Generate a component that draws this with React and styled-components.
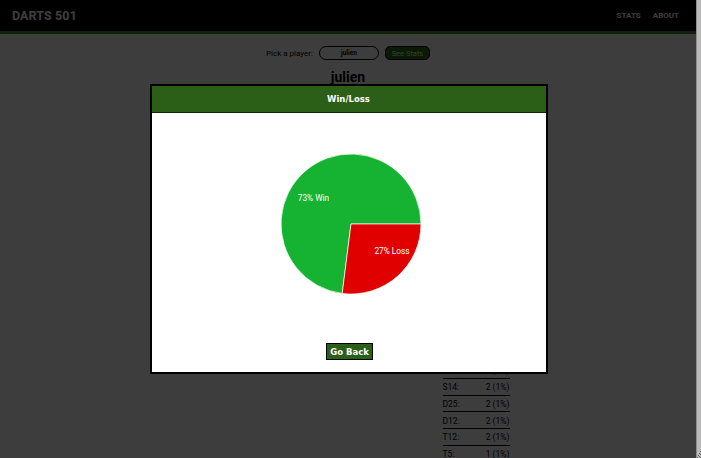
import React from 'react';
import styled, { createGlobalStyle } from 'styled-components';

const GlobalStyle = createGlobalStyle`
  html, body {
    margin: 0;
    padding: 0;
    overflow: hidden;
    background: #fff;
    font-family: Roboto, "Liberation Sans", sans-serif;
  }
`;

const stats = [
  ['S20', '14 (9%)'], ['S1', '12 (8%)'], ['S5', '11 (7%)'], ['S19', '9 (6%)'],
  ['T20', '8 (5%)'], ['S18', '7 (5%)'], ['S3', '6 (4%)'], ['S17', '6 (4%)'],
  ['S12', '5 (3%)'], ['D20', '5 (3%)'], ['S25', '4 (3%)'], ['S15', '4 (3%)'],
  ['S9', '3 (2%)'], ['T19', '3 (2%)'], ['S6', '3 (2%)'], ['S16', '3 (2%)'],
  ['S11', '2 (1%)'], ['S14', '2 (1%)'], ['D25', '2 (1%)'], ['D12', '2 (1%)'],
  ['T12', '2 (1%)'], ['T5', '1 (1%)'], ['S2', '1 (1%)'], ['S8', '1 (1%)'],
];

function Pie({ win }) {
  const r = 70;
  const c = 70;
  const lossAngle = (1 - win) * 2 * Math.PI;
  const ex = c + r * Math.cos(lossAngle);
  const ey = c + r * Math.sin(lossAngle);
  const large = lossAngle > Math.PI ? 1 : 0;
  return (
    <PieSvg width="140" height="140" viewBox="0 0 140 140">
      <path
        d={`M${c},${c} L${c + r},${c} A${r},${r} 0 ${1 - large} 0 ${ex},${ey} Z`}
        fill="#15b331"
        stroke="#fff"
        strokeWidth="0.7"
      />
      <path
        d={`M${c},${c} L${c + r},${c} A${r},${r} 0 ${large} 1 ${ex},${ey} Z`}
        fill="#e00000"
        stroke="#fff"
        strokeWidth="0.7"
      />
      <text x="32.5" y="47" textAnchor="middle" fill="#fff" fontSize="8.3" fontFamily="Roboto, sans-serif">
        {Math.round(win * 100)}% Win
      </text>
      <text x="111" y="100" textAnchor="middle" fill="#fff" fontSize="8.3" fontFamily="Roboto, sans-serif">
        {Math.round((1 - win) * 100)}% Loss
      </text>
    </PieSvg>
  );
}

export default function App() {
  return (
    <>
      <GlobalStyle />
      <Frame>
        <Page>
          <Header>
            <Logo>DARTS 501</Logo>
            <Nav>
              <a href="#">Stats</a>
              <a href="#">About</a>
            </Nav>
          </Header>
          <PickRow>
            <label>Pick a player:</label>
            <PlayerInput defaultValue="julien" />
            <SeeStats>See Stats</SeeStats>
          </PickRow>
          <PlayerName>julien</PlayerName>
          <StatsArea>
            <Charts />
            <StatsTable>
              {stats.map(([k, v]) => (
                <StatRow key={k}>
                  <span>{k}:</span>
                  <span>{v}</span>
                </StatRow>
              ))}
            </StatsTable>
          </StatsArea>
          <Overlay>
            <Modal>
              <ModalHeader>Win/Loss</ModalHeader>
              <ModalBody>
                <Pie win={0.73} />
                <GoBack>Go Back</GoBack>
              </ModalBody>
            </Modal>
          </Overlay>
        </Page>
        <ScrollTrack>
          <svg width="4" height="8" viewBox="0 0 4 8">
            <path d="M3,1h1v1h-1zM2,3h1v1h-1zM3,4h1v1h-1zM1,5h1v1h-1zM2,6h1v1h-1zM0,7h1v1h-1zM3,7h1v1h-1z" fill="#666" />
          </svg>
        </ScrollTrack>
      </Frame>
    </>
  );
}

const Frame = styled.div`
  display: flex;
  height: 100vh;
`;

const Page = styled.div`
  position: relative;
  flex: 1;
  height: 100vh;
  overflow: hidden;
  background: #fff;
`;

const ScrollTrack = styled.div`
  width: 4px;
  background: #b9b9b9;
  border-left: 1px solid #8e8e8e;
  display: flex;
  flex-direction: column;
  justify-content: flex-end;
`;

const Header = styled.div`
  height: 31px;
  background: #000;
  border-bottom: 3px solid #3f8a22;
  display: flex;
  align-items: center;
  justify-content: space-between;
  padding: 0 17px 0 12px;
`;

const Logo = styled.div`
  color: #fff;
  font-weight: 700;
  font-size: 12.5px;
  letter-spacing: 0.1px;
`;

const Nav = styled.div`
  display: flex;
  gap: 12px;
  a {
    color: #fff;
    text-decoration: none;
    text-transform: uppercase;
    font-weight: 700;
    font-size: 8px;
  }
`;

const PickRow = styled.div`
  margin-top: 12px;
  display: flex;
  justify-content: center;
  align-items: center;
  gap: 6px;
  font-size: 8px;
  color: #000;
`;

const PlayerInput = styled.input`
  width: 58px;
  height: 12px;
  border: 1px solid #000;
  border-radius: 8px;
  text-align: center;
  font-family: Roboto, sans-serif;
  font-weight: 700;
  font-size: 6.5px;
  padding: 0;
`;

const SeeStats = styled.button`
  width: 45px;
  height: 14px;
  padding: 0;
  border: 1px solid #000;
  border-radius: 5px;
  background: #2b6e1a;
  color: #c8ffb0;
  font-family: Roboto, sans-serif;
  font-size: 7.5px;
`;

const PlayerName = styled.h2`
  margin: 9px 0 0;
  text-align: center;
  font-size: 14px;
  font-weight: 700;
  color: #000;
`;

const StatsArea = styled.div`
  display: flex;
  justify-content: center;
  gap: 20px;
  margin-top: 8px;
`;

const Charts = styled.div`
  width: 236px;
`;

const StatsTable = styled.div`
  width: 67px;
  display: flex;
  flex-direction: column;
`;

const StatRow = styled.div`
  box-sizing: border-box;
  height: 16.75px;
  border-top: 1px solid #000;
  display: flex;
  justify-content: space-between;
  align-items: center;
  font-size: 8.5px;
  color: #000;
  padding-top: 1px;
`;

const Overlay = styled.div`
  position: absolute;
  inset: 0;
  background: rgba(0, 0, 0, 0.76);
  display: flex;
  align-items: center;
  justify-content: center;
`;

const Modal = styled.div`
  width: 398px;
  height: 290px;
  box-sizing: border-box;
  border: 2px solid #000;
  background: #fff;
  display: flex;
  flex-direction: column;
  margin-left: 1px;
`;

const ModalHeader = styled.div`
  height: 26px;
  background: #2b5e17;
  border-bottom: 1px solid #0f2a06;
  color: #fff;
  display: flex;
  align-items: center;
  justify-content: center;
  font-family: "DejaVu Sans", Verdana, sans-serif;
  font-weight: 700;
  font-size: 8.5px;
`;

const ModalBody = styled.div`
  flex: 1;
  display: flex;
  flex-direction: column;
  align-items: center;
  padding-top: 41px;
`;

const PieSvg = styled.svg`
  display: block;
  margin-left: 4px;
`;

const GoBack = styled.button`
  margin-top: 49px;
  width: 47px;
  height: 17px;
  padding: 0;
  margin-left: 2px;
  border: 1px solid #000;
  background: #2b5e17;
  color: #fff;
  font-family: "DejaVu Sans", Verdana, sans-serif;
  font-weight: 700;
  font-size: 8.5px;
`;
